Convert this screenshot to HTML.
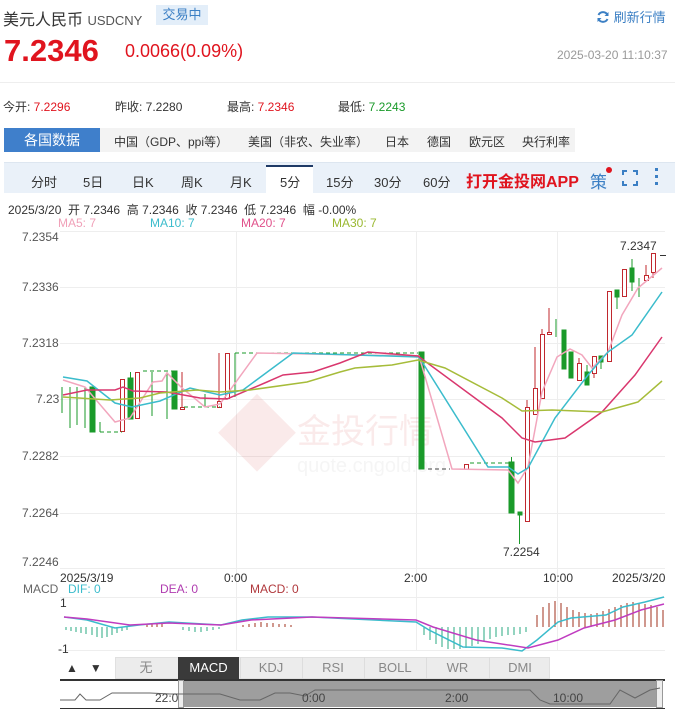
<!DOCTYPE html>
<html><head><meta charset="utf-8"><style>
*{margin:0;padding:0;box-sizing:border-box}
body{width:675px;height:710px;background:#fff;font-family:"Liberation Sans","Noto Sans CJK SC",sans-serif;position:relative;overflow:hidden;color:#333}
.a{position:absolute;white-space:nowrap}
</style></head><body>
<div class="a" style="left:3px;top:6px;font-size:16px;color:#333">美元人民币 <span style="font-size:13px;color:#555">USDCNY</span></div>
<div class="a" style="left:156px;top:5px;width:52px;height:20px;background:#e3eef9;color:#3b7fc4;font-size:13px;line-height:20px;text-align:center">交易中</div>
<div class="a" style="left:596px;top:7px;font-size:13px;color:#3b7fc4"><svg width="14" height="14" viewBox="0 0 14 14" style="vertical-align:-2px"><path d="M11.5 5A5 5 0 0 0 2.5 5M2.5 9A5 5 0 0 0 11.5 9" stroke="#3b7fc4" stroke-width="2" fill="none"/><path d="M12.5 2v4h-4zM1.5 12V8h4z" fill="#3b7fc4"/></svg> 刷新行情</div>
<div class="a" style="left:4px;top:33px;font-size:31px;font-weight:bold;color:#e0141e">7.2346</div>
<div class="a" style="left:125px;top:41px;font-size:18px;color:#e0141e">0.0066(0.09%)</div>
<div class="a" style="left:557px;top:48px;font-size:12px;color:#999">2025-03-20 11:10:37</div>
<div class="a" style="left:0;top:82px;width:675px;height:1px;background:#eee"></div>
<div class="a" style="left:3px;top:98px;font-size:12px;color:#333">今开: <span style="color:#e0141e">7.2296</span></div>
<div class="a" style="left:115px;top:98px;font-size:12px;color:#333">昨收: 7.2280</div>
<div class="a" style="left:227px;top:98px;font-size:12px;color:#333">最高: <span style="color:#e0141e">7.2346</span></div>
<div class="a" style="left:338px;top:98px;font-size:12px;color:#333">最低: <span style="color:#1a9a2a">7.2243</span></div>
<div class="a" style="left:4px;top:128px;width:96px;height:24px;background:#3f7fcb;color:#fff;font-size:14px;line-height:24px;text-align:center">各国数据</div>
<div class="a" style="left:100px;top:128px;width:475px;height:24px;background:#f3f3f3"></div>
<div class="a" style="left:114px;top:133px;font-size:12px;color:#333">中国（GDP、ppi等）</div>
<div class="a" style="left:248px;top:133px;font-size:12px;color:#333">美国（非农、失业率）</div>
<div class="a" style="left:385px;top:133px;font-size:12px;color:#333">日本</div>
<div class="a" style="left:427px;top:133px;font-size:12px;color:#333">德国</div>
<div class="a" style="left:469px;top:133px;font-size:12px;color:#333">欧元区</div>
<div class="a" style="left:522px;top:133px;font-size:12px;color:#333">央行利率</div>
<div class="a" style="left:4px;top:162px;width:671px;height:31px;background:#eaf1f9;border-top:1px solid #dde6f0"></div>
<div class="a" style="left:266px;top:165px;width:47px;height:29px;background:#fff;border-top:2px solid #1f3a66"></div>
<div class="a" style="top:172px;left:0;font-size:13px;color:#333;width:675px;height:20px">
<span class="a" style="left:31px">分时</span><span class="a" style="left:83px">5日</span><span class="a" style="left:132px">日K</span><span class="a" style="left:181px">周K</span><span class="a" style="left:230px">月K</span><span class="a" style="left:280px">5分</span><span class="a" style="left:326px">15分</span><span class="a" style="left:374px">30分</span><span class="a" style="left:423px">60分</span></div>
<div class="a" style="left:466px;top:168px;font-size:16px;font-weight:bold;color:#e0141e">打开金投网APP</div>
<div class="a" style="left:590px;top:168px;font-size:17px;color:#3b7fc4">策</div>
<div class="a" style="left:606px;top:167px;width:6px;height:6px;border-radius:3px;background:#e0141e"></div>
<svg class="a" style="left:622px;top:170px" width="16" height="16"><path d="M1 5V1h4M11 1h4v4M15 11v4h-4M5 15H1v-4" stroke="#3b7fc4" stroke-width="2" fill="none"/></svg>
<div class="a" style="left:655px;top:168px;width:3px;height:3px;background:#3b7fc4;box-shadow:0 7px #3b7fc4,0 14px #3b7fc4"></div>
<div class="a" style="left:8px;top:201px;font-size:12px;color:#333">2025/3/20 &nbsp;开 7.2346 &nbsp;高 7.2346 &nbsp;收 7.2346 &nbsp;低 7.2346 &nbsp;幅 -0.00%</div>
<div class="a" style="left:58px;top:216px;font-size:12px;color:#f0a0b8">MA5: 7</div>
<div class="a" style="left:150px;top:216px;font-size:12px;color:#3bbccc">MA10: 7</div>
<div class="a" style="left:241px;top:216px;font-size:12px;color:#e0508a">MA20: 7</div>
<div class="a" style="left:332px;top:216px;font-size:12px;color:#9ab830">MA30: 7</div>

<svg class="a" style="left:0;top:0" width="675" height="710" font-family="Liberation Sans,sans-serif" font-size="12">
<g stroke="#eee" stroke-width="1">
<line x1="60" y1="231.5" x2="665" y2="231.5"/><line x1="60" y1="287.5" x2="665" y2="287.5"/><line x1="60" y1="343.5" x2="665" y2="343.5"/><line x1="60" y1="399.5" x2="665" y2="399.5"/><line x1="60" y1="456.5" x2="665" y2="456.5"/><line x1="60" y1="513.5" x2="665" y2="513.5"/><line x1="60" y1="568.5" x2="665" y2="568.5"/>
<line x1="236.5" y1="231" x2="236.5" y2="650"/><line x1="416.5" y1="231" x2="416.5" y2="650"/><line x1="557.5" y1="231" x2="557.5" y2="650"/>
<line x1="60" y1="597.5" x2="665" y2="597.5"/><line x1="60" y1="650.5" x2="665" y2="650.5"/>
</g>
<g fill="#555">
<text x="22" y="241">7.2354</text><text x="22" y="291">7.2336</text><text x="22" y="347">7.2318</text><text x="36" y="403">7.23</text><text x="22" y="460">7.2282</text><text x="22" y="517">7.2264</text><text x="22" y="566">7.2246</text>
</g>
<g opacity="0.08" fill="#c00"><rect x="230" y="405" width="55" height="55" transform="rotate(45 257 432)"/><text x="297" y="443" font-size="34" font-family="Noto Sans CJK SC">金投行情</text><text x="297" y="472" font-size="20" fill="#888">quote.cngold.org</text></g>
<g stroke="#1a9a2a" fill="#1a9a2a">
<line x1="62" y1="387" x2="62" y2="413"/><line x1="70" y1="387" x2="70" y2="428"/><line x1="77" y1="387" x2="77" y2="425"/><line x1="85" y1="387" x2="85" y2="428"/>
<rect x="90" y="387" width="5" height="45"/><line x1="100" y1="422" x2="100" y2="432"/>
<rect x="128" y="378" width="5" height="41"/><line x1="130.5" y1="372" x2="130.5" y2="378"/>
<line x1="152" y1="372" x2="152" y2="416"/><line x1="167" y1="372" x2="167" y2="419"/><rect x="172" y="371" width="5" height="38"/>
<line x1="205" y1="394" x2="205" y2="407"/><line x1="235" y1="353" x2="235" y2="397"/>
<rect x="419" y="352" width="5" height="117"/>
<rect x="509" y="462" width="5" height="51"/><line x1="511.5" y1="457" x2="511.5" y2="462"/>
<rect x="518" y="512" width="4" height="3"/><line x1="519.5" y1="515" x2="519.5" y2="544"/>
<line x1="556" y1="319" x2="556" y2="337"/><rect x="562" y="330" width="4" height="39"/><rect x="569" y="352" width="4" height="26"/>
<rect x="585" y="372" width="4" height="13"/><line x1="587" y1="365" x2="587" y2="385"/>
<rect x="599" y="356" width="4" height="6"/><line x1="601" y1="362" x2="601" y2="369"/>
<rect x="615" y="290" width="4" height="7"/><line x1="617" y1="297" x2="617" y2="309"/>
<rect x="630" y="268" width="4" height="14"/><line x1="632" y1="259" x2="632" y2="291"/>
<line x1="639" y1="278" x2="639" y2="297"/>
</g>
<g stroke="#c0282e" fill="#fff">
<rect x="120.5" y="379.5" width="4" height="52"/><rect x="135.5" y="372.5" width="4" height="46"/>
<line x1="182" y1="372" x2="182" y2="407"/><rect x="180.5" y="407.5" width="4" height="2"/>
<line x1="219" y1="353" x2="219" y2="401"/><rect x="217.5" y="401.5" width="4" height="6"/>
<rect x="225.5" y="353.5" width="4" height="45"/>
<rect x="464.5" y="464.5" width="4" height="5"/>
<line x1="527" y1="400" x2="527" y2="407"/><rect x="525.5" y="407.5" width="4" height="114"/>
<line x1="535" y1="347" x2="535" y2="388"/><rect x="533.5" y="388.5" width="4" height="26"/>
<line x1="542" y1="329" x2="542" y2="334"/><rect x="540.5" y="334.5" width="4" height="64"/>
<line x1="549" y1="308" x2="549" y2="332"/><rect x="547.5" y="332.5" width="4" height="2"/>
<line x1="579" y1="358" x2="579" y2="363"/><rect x="577.5" y="363.5" width="4" height="17"/>
<line x1="594" y1="374" x2="594" y2="378"/><rect x="592.5" y="356.5" width="4" height="17"/>
<rect x="607.5" y="291.5" width="4" height="70"/><rect x="622.5" y="269.5" width="4" height="27"/>
<line x1="646" y1="265" x2="646" y2="280"/><rect x="644.5" y="275.5" width="4" height="5"/>
<rect x="651.5" y="253.5" width="4" height="19"/><line x1="653" y1="273" x2="653" y2="278"/>
</g>
<g stroke="#444" stroke-dasharray="4,3" fill="none">
<line x1="100" y1="432" x2="122" y2="432" stroke="#1a9a2a"/><line x1="143" y1="371" x2="175" y2="371" stroke="#1a9a2a"/><line x1="184" y1="407" x2="220" y2="407" stroke="#1a9a2a"/><line x1="235" y1="353" x2="418" y2="353" stroke="#1a9a2a"/><line x1="428" y1="469" x2="450" y2="469"/><line x1="470" y1="463" x2="510" y2="463" stroke="#1a9a2a"/>
</g>
<line x1="660" y1="255.5" x2="666" y2="255.5" stroke="#333"/>
<text x="620" y="250" fill="#333">7.2347</text><text x="503" y="556" fill="#333">7.2254</text>
<g fill="none" stroke-width="1.5">
<polyline stroke="#f2a6bd" points="63,380 85,387 115,422 130,418 153,382 162,381 167,373 182,388 205,407 220,404 257,353 419,356 452,469 508,470 518,483 528,467 542,392 557,357 570,349 582,355 592,368 608,352 622,315 638,288 662,268"/>
<polyline stroke="#3bbccc" points="63,377 87,381 115,403 132,407 160,401 190,388 220,395 243,390 293,353 419,357 488,467 508,467 518,474 528,468 555,418 588,375 608,352 632,335 662,292"/>
<polyline stroke="#d9376e" points="63,395 87,390 115,390 123,387 133,391 167,392 200,398 227,399 267,382 283,375 313,372 340,363 368,352 418,356 502,418 522,438 535,442 565,438 602,412 635,375 662,337"/>
<polyline stroke="#a6bc3a" points="63,397 110,400 140,398 160,393 197,390 220,392 250,390 307,382 340,372 355,368 392,365 418,360 445,368 502,398 522,411 552,410 602,412 638,402 662,381"/>
</g>
<g fill="#333"><text x="60" y="582">2025/3/19</text><text x="224" y="582">0:00</text><text x="404" y="582">2:00</text><text x="543" y="582">10:00</text><text x="612" y="582">2025/3/20</text></g>
<text x="23" y="593" fill="#666">MACD</text><text x="68" y="593" fill="#3bbccc">DIF: 0</text><text x="160" y="593" fill="#b03cb0">DEA: 0</text><text x="250" y="593" fill="#b0383c">MACD: 0</text>
<text x="60" y="607" fill="#333">1</text><text x="58" y="653" fill="#333">-1</text>
<g stroke="#2aa880" stroke-width="1">
<path d="M66 627v3M71 627v4M76 627v5M81 627v6M86 627v7M92 627v8M97 627v10M102 627v11M107 627v10M112 627v8M117 627v6M122 627v4M127 627v3M183 627v3M189 627v4M195 627v5M201 627v5M207 627v4M213 627v3M219 627v2M424 627v8M430 627v13M436 627v17M442 627v20M448 627v22M454 627v22M460 627v22M466 627v21M472 627v19M478 627v17M484 627v14M490 627v12M496 627v10M502 627v9M508 627v8M514 627v8M520 627v7M526 627v5"/>
</g>
<g stroke="#a0301c" stroke-width="1">
<path d="M147 627v-3M152 627v-4M157 627v-4M162 627v-3M243 627v-2M249 627v-3M255 627v-4M261 627v-5M267 627v-4M273 627v-4M279 627v-3M285 627v-3M291 627v-2M537 627v-12M543 627v-20M549 627v-24M555 627v-26M561 627v-24M567 627v-20M573 627v-17M579 627v-15M585 627v-14M591 627v-13M597 627v-14M603 627v-16M609 627v-18M615 627v-20M621 627v-22M627 627v-24M633 627v-25M639 627v-24M645 627v-23M651 627v-22M657 627v-20M663 627v-17"/>
</g>
<g fill="none" stroke-width="1.5">
<polyline stroke="#3bbccc" points="64,617 87,620 115,628 139,625 169,622 221,625 242,620 268,617 312,617 416,622 429,630 463,647 502,648 522,651 537,640 558,622 571,618 606,615 623,607 645,602 664,597"/>
<polyline stroke="#c03cc0" points="64,617 87,619 130,625 169,623 221,625 251,620 312,617 416,620 433,627 476,640 528,648 558,640 584,628 615,620 641,610 664,604"/>
</g>
</svg>
<div class="a" style="left:60px;top:657px;width:55px;height:22px;background:#fff;font-size:12px;line-height:22px"><span style="margin-left:6px">▲</span><span style="margin-left:12px">▼</span></div>
<div class="a" style="left:115px;top:657px;width:435px;height:22px;background:#ececec;border:1px solid #e0e0e0"></div>
<div class="a" style="top:657px;left:0;height:22px;font-size:13px;line-height:22px;color:#888;width:675px">
<span class="a" style="left:115px;width:62px;text-align:center">无</span>
<span class="a" style="left:178px;width:61px;text-align:center;background:#3a3a3a;color:#fff">MACD</span>
<span class="a" style="left:240px;width:61px;text-align:center;border-left:1px solid #ddd">KDJ</span>
<span class="a" style="left:302px;width:61px;text-align:center;border-left:1px solid #ddd">RSI</span>
<span class="a" style="left:364px;width:61px;text-align:center;border-left:1px solid #ddd">BOLL</span>
<span class="a" style="left:426px;width:62px;text-align:center;border-left:1px solid #ddd">WR</span>
<span class="a" style="left:489px;width:61px;text-align:center;border-left:1px solid #ddd">DMI</span></div>
<div class="a" style="left:60px;top:679px;width:605px;height:2px;background:#333"></div>
<div class="a" style="left:178px;top:681px;width:484px;height:26px;background:#9e9e9e"></div>
<div class="a" style="left:178px;top:680px;width:6px;height:28px;background:#eee;border:1px solid #999"></div>
<div class="a" style="left:656px;top:680px;width:7px;height:28px;background:#eee;border:1px solid #999"></div>
<svg class="a" style="left:60px;top:680px" width="605" height="30" font-family="Liberation Sans,sans-serif" font-size="12">
<polyline fill="none" stroke="#666" points="0,20 15,20 20,14 26,20 40,20 52,13 90,13 110,14 160,14 180,20 200,20 215,13 230,13 245,16 255,10 300,10 320,10 400,10 430,10 470,10 480,20 490,24 550,24 560,10 575,18 590,10 600,8"/>
<g fill="#444"><text x="95" y="22">22:0</text><text x="242" y="22">0:00</text><text x="385" y="22">2:00</text><text x="493" y="22">10:00</text></g>
<line x1="0" y1="28.5" x2="605" y2="28.5" stroke="#333"/>
</svg>
</body></html>
